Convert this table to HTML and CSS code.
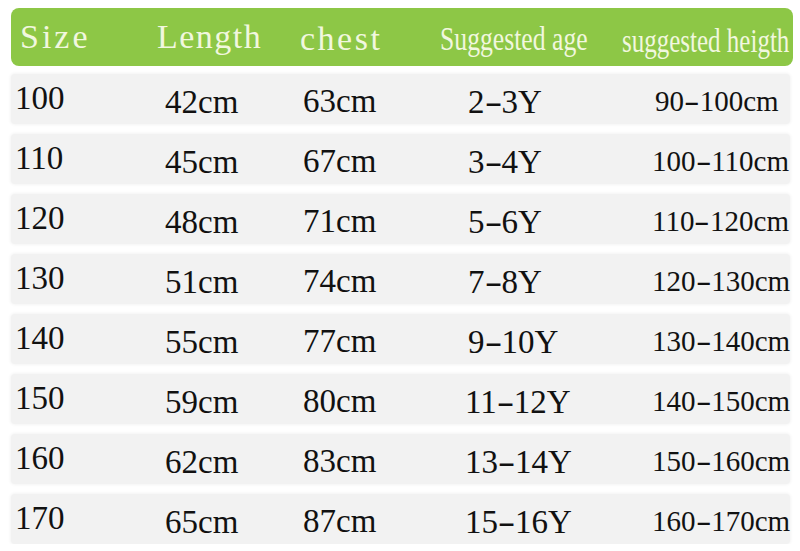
FILE: index.html
```html
<!DOCTYPE html>
<html>
<head>
<meta charset="utf-8">
<link rel="stylesheet" href="styles.css">
</head>
<body>
<div class="chart">
  <div class="head">
    <span class="h h-size">Size</span>
    <span class="h h-len">Length</span>
    <span class="h h-chest">chest</span>
    <span class="h h-age"><span class="narrow">Suggested age</span></span>
    <span class="h h-ht"><span class="narrow">suggested heigth</span></span>
  </div>
  <div class="row"><span class="c size">100</span><span class="c len">42cm</span><span class="c chest">63cm</span><span class="c age">2<span class="d">-</span>3Y</span><span class="c ht ht1">90<span class="d">-</span>100cm</span></div>
  <div class="row"><span class="c size">110</span><span class="c len">45cm</span><span class="c chest">67cm</span><span class="c age">3<span class="d">-</span>4Y</span><span class="c ht">100<span class="d">-</span>110cm</span></div>
  <div class="row"><span class="c size">120</span><span class="c len">48cm</span><span class="c chest">71cm</span><span class="c age">5<span class="d">-</span>6Y</span><span class="c ht">110<span class="d">-</span>120cm</span></div>
  <div class="row"><span class="c size">130</span><span class="c len">51cm</span><span class="c chest">74cm</span><span class="c age">7<span class="d">-</span>8Y</span><span class="c ht">120<span class="d">-</span>130cm</span></div>
  <div class="row"><span class="c size">140</span><span class="c len">55cm</span><span class="c chest">77cm</span><span class="c age">9<span class="d">-</span>10Y</span><span class="c ht">130<span class="d">-</span>140cm</span></div>
  <div class="row"><span class="c size">150</span><span class="c len">59cm</span><span class="c chest">80cm</span><span class="c age age2">11<span class="d">-</span>12Y</span><span class="c ht">140<span class="d">-</span>150cm</span></div>
  <div class="row"><span class="c size">160</span><span class="c len">62cm</span><span class="c chest">83cm</span><span class="c age age2">13<span class="d">-</span>14Y</span><span class="c ht">150<span class="d">-</span>160cm</span></div>
  <div class="row"><span class="c size">170</span><span class="c len">65cm</span><span class="c chest">87cm</span><span class="c age age2">15<span class="d">-</span>16Y</span><span class="c ht">160<span class="d">-</span>170cm</span></div>
</div>
</body>
</html>
```

FILE: styles.css
```css
html, body {
  margin: 0;
  padding: 0;
  background: #ffffff;
}
body {
  font-family: "Liberation Serif", "Times New Roman", serif;
  color: #111111;
}
.chart {
  padding: 8px 0 0 11px;
  width: 782px;
  display: flex;
  flex-direction: column;
  gap: 10px;
}
.head {
  height: 58px;
  background: #8dc746;
  border-radius: 8px;
  display: grid;
  grid-template-columns: 137px 143px 140px 182px 1fr;
  align-items: center;
  padding-left: 9px;
  margin-bottom: -2px;
  color: #f1f7df;
}
.h {
  font-size: 34px;
  letter-spacing: 3px;
  line-height: 1;
  white-space: nowrap;
}
.h-len { letter-spacing: 1.5px; }
.h-chest { letter-spacing: 2.5px; padding-top: 4px; }
.h-age, .h-ht {
  letter-spacing: 0;
  padding-top: 6px;
}
.h-age { font-size: 25.7px; }
.h-ht { font-size: 25px; }
.narrow {
  display: inline-block;
  transform-origin: left center;
}
.h-age .narrow { transform: scaleY(1.28); }
.h-ht .narrow { transform: scaleY(1.32); }
.row {
  width: 779px;
  height: 50px;
  background: #f2f2f2;
  border-radius: 4px;
  box-shadow: 0 0 3px 1px #f4f4f4;
  display: grid;
  grid-template-columns: 150px 138px 165px 186px 1fr;
  align-items: center;
  padding-left: 4px;
  box-sizing: border-box;
}
.c {
  font-size: 33px;
  line-height: 1;
  white-space: nowrap;
}
.d {
  display: inline-block;
  transform: scaleX(1.6);
  margin: 0 3px;
}
.size { padding-bottom: 2px; }
.len { padding-top: 6px; }
.chest { padding-top: 4px; }
.age { padding-top: 6px; }
.age2 { margin-left: -3px; }
.ht { font-size: 29px; padding-top: 5px; margin-left: -2px; }
.ht1 { margin-left: 1px; }
```
